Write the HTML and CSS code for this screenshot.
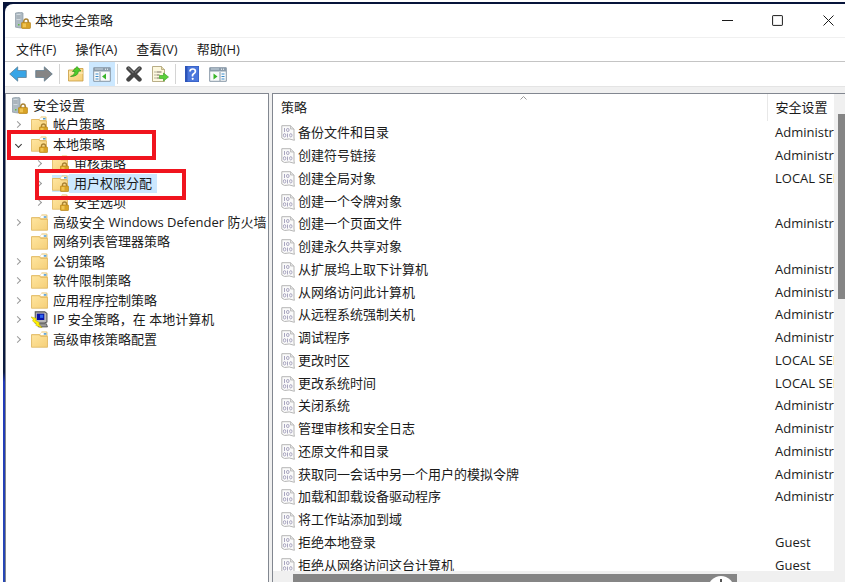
FILE: index.html
```html
<!DOCTYPE html>
<html lang="zh-CN">
<head>
  <meta charset="utf-8" />
  <title>本地安全策略</title>
  <link rel="stylesheet" href="styles.css">
</head>
<body>
  <svg class="sprite" aria-hidden="true">
    <defs>
      <linearGradient id="gold" x1="0" y1="0" x2="1" y2="1">
        <stop offset="0" stop-color="#ffe6a0" /><stop offset="1" stop-color="#f5cf78" />
      </linearGradient>
    </defs>
    <symbol id="folder" viewBox="0 0 16 16">
      <path d="M.5 3h8l1.500-2.500h4.500q1 0 1 1V14.500H.5z" fill="#e9c46d" />
      <path d="M9.500 1.500h5v2.500h-6z" fill="#fff" /><path d="M12 2h2.500v1.500H12z" fill="#4d9ad4" />
      <path d="M.5 3.500h7.500l1 1.500h6.500V15.300H.5z" fill="url(#gold)" stroke="#dcb25a" stroke-width=".7" />
    </symbol>
    <symbol id="lock" viewBox="0 0 9 10">
      <path d="M2.500 5V3a2 2 0 0 1 4 0v2" fill="none" stroke="#a98233" stroke-width="1.400" />
      <rect x=".5" y="4" width="8" height="5.500" rx=".6" fill="#d9a326" stroke="#b8851a" stroke-width=".7" />
      <path d="M1.500 5h3v3.500h-3z" fill="#f0c452" />
    </symbol>
    <symbol id="folder-lock" viewBox="0 0 17 17">
      <use href="#folder" width="16" height="16" />
      <use href="#lock" x="8" y="7" width="9" height="10" />
    </symbol>
    <symbol id="server-lock" viewBox="0 0 17 17">
      <path d="M1.500 1l5-.8 2.500.8v14l-2.500 1-5-.8z" fill="#aebac3" stroke="#8a98a3" stroke-width=".7" />
      <path d="M2.500 3h4M2.500 5h4M2.500 7h4" stroke="#f4f8fa" />
      <path d="M2.500 4h4M2.500 6h4" stroke="#61717c" stroke-width=".7" />
      <path d="M4 12h1.500v1.500H4z" fill="#63c044" />
      <use href="#lock" x="7" y="6" width="10" height="11" />
    </symbol>
    <symbol id="ipsec" viewBox="0 0 16 16">
      <path d="M4 .8h9l2 1.500v8l-2 1H4z" fill="#b8b8b8" stroke="#555" />
      <path d="M5.500 2.500h7v6h-7z" fill="#0712a8" /><path d="M8.500 3.500h3v3h-3z" fill="#2c65f0" />
      <path d="M6 12h8.500l1 3H7z" fill="#9e9e9e" stroke="#444" stroke-width=".7" />
      <path d="M0 5.500l5 1.500-.5 2 3.500 2-.5 1.500 3 3.500-6-2.500.5-1.500-3.500-2.500.5-1.500z" fill="#fff200" stroke="#b0a000" stroke-width=".4" />
    </symbol>
    <symbol id="policy" viewBox="0 0 14 16">
      <path d="M.8.7h8.700l3.500 3.300v9l.4 2.300Q8 13 3.500 14.500L.8 13z" fill="#fafafa" stroke="#b5b5b5" />
      <path d="M9.500.7v3.300H13" fill="#e2e2e2" stroke="#b5b5b5" stroke-width=".8" />
      <g fill="none" stroke="#a9a6c0">
        <path d="M3.500 3v4M6.500 8.500v4" />
        <ellipse cx="6.800" cy="5" rx="1.300" ry="1.600" />
        <ellipse cx="3.600" cy="10.300" rx="1.200" ry="1.700" />
        <ellipse cx="9.800" cy="10.300" rx="1.200" ry="1.700" />
      </g>
    </symbol>
    <symbol id="arrow" viewBox="0 0 18 16">
      <path d="M.7 8l8-7.200V4.500H17.300v7H8.700v3.700z" fill="currentColor" stroke="#56758a" stroke-width=".7" stroke-linejoin="round" />
    </symbol>
    <symbol id="window-pane" viewBox="0 0 18 16">
      <path d="M.7 1.700h16.600v13.600H.7z" fill="#f8fafb" stroke="#8696a5" />
      <path d="M1 2h16v3.500H1z" fill="#8c9dac" /><path d="M2 3h8" stroke="#c9d5df" />
      <path d="M12 3.200h1M14 3.200h1" stroke="#fff" />
    </symbol>
  </svg>

  <div class="desktop">
    <main class="window">
      <header class="titlebar">
        <svg class="icon"><use href="#server-lock" /></svg>
        <h1>本地安全策略</h1>
        <div class="caption-buttons">
          <button aria-label="最小化"><svg viewBox="0 0 11 11"><path d="M0 5.500h11" /></svg></button>
          <button aria-label="最大化"><svg viewBox="0 0 11 11"><rect x=".6" y=".6" width="9.800" height="9.800" rx=".5" /></svg></button>
          <button aria-label="关闭"><svg viewBox="0 0 11 11"><path d="M.5.5l10 10M10.500.5l-10 10" /></svg></button>
        </div>
      </header>

      <nav class="menubar">
        <button>文件(F)</button>
        <button>操作(A)</button>
        <button>查看(V)</button>
        <button>帮助(H)</button>
      </nav>

      <div class="toolbar">
        <button class="back" aria-label="后退"><svg class="tool"><use href="#arrow" /></svg></button>
        <button class="forward" aria-label="前进"><svg class="tool"><use href="#arrow" /></svg></button>
        <span class="sep"></span>
        <button aria-label="上一级">
          <svg class="tool" viewBox="0 0 18 16">
            <path d="M1.500 4h5l1-1.500h8.500V15h-14.500z" fill="url(#gold)" stroke="#c69b3f" stroke-width=".8" />
            <path d="M2 7h14" stroke="#fff2c7" />
            <path d="M3.500 10.500Q7.500 9.500 8 5.500L5.500 5.500 10 .5l4 4.500-2.500.2Q11 10.500 3.500 10.500z" fill="#4ecb2b" stroke="#248c13" stroke-width=".6" />
          </svg>
        </button>
        <button class="on" aria-label="显示/隐藏控制台树" aria-pressed="true">
          <svg class="tool" viewBox="0 0 18 16">
            <use href="#window-pane" />
            <path d="M7 6v9" stroke="#8696a5" />
            <path d="M2.500 8h3M2.500 10.500h3M2.500 13h3" stroke="#3b8bc9" />
            <path d="M13 7.500v6L9 10.500z" fill="#38b529" />
          </svg>
        </button>
        <span class="sep"></span>
        <button aria-label="删除">
          <svg class="tool" viewBox="0 0 18 16">
            <path d="M3.500 2.500L14.500 13.500M14.500 2.500L3.500 13.500" stroke="#444" stroke-width="4.400" stroke-linecap="round" />
            <path d="M3.500 2L8 6.500M14.500 2L10.500 6" stroke="#777" stroke-width="1.200" stroke-linecap="round" />
          </svg>
        </button>
        <button aria-label="导出列表">
          <svg class="tool" viewBox="0 0 18 16">
            <path d="M1.500.5h9l3 3v12h-12z" fill="#fdf8de" stroke="#a79b6c" stroke-width=".8" />
            <path d="M10.500.5v3h3" fill="#e6dcae" stroke="#a79b6c" stroke-width=".7" />
            <path d="M3.500 6h1M5.500 6h5M3.500 9h1M5.500 9h3M3.500 12h1M5.500 12h3" stroke="#746b5d" />
            <path d="M8.500 9.500h4V7l5 4-5 4v-2.500h-4z" fill="#5bd13a" stroke="#2f9c1d" stroke-width=".6" />
          </svg>
        </button>
        <span class="sep"></span>
        <button aria-label="帮助">
          <svg class="tool" viewBox="0 0 18 16">
            <path d="M2 0h14v16H2z" fill="#2c54b8" /><path d="M4.500.5h11v15h-11z" fill="#4a76dc" />
            <path d="M7 5.500Q7 3 9.700 3t2.700 2.300q0 1.500-1.700 2.400T9.700 10.500" fill="none" stroke="#fff" stroke-width="1.700" />
            <circle cx="9.700" cy="12.800" r="1.100" fill="#fff" />
          </svg>
        </button>
        <button aria-label="显示/隐藏操作窗格">
          <svg class="tool" viewBox="0 0 18 16">
            <use href="#window-pane" />
            <path d="M11 6v9" stroke="#8696a5" />
            <path d="M12.500 8h3M12.500 10.500h3M12.500 13h3" stroke="#3b8bc9" />
            <path d="M4.500 7.500v6l4-3z" fill="#38b529" />
          </svg>
        </button>
      </div>

      <div class="panes">
        <ul class="tree" role="tree">
          <li class="root" role="treeitem"><svg class="icon"><use href="#server-lock" /></svg><span>安全设置</span></li>
          <li role="treeitem"><i class="chevron"></i><svg class="icon"><use href="#folder-lock" /></svg><span>帐户策略</span></li>
          <li class="marked" role="treeitem" aria-expanded="true"><i class="chevron open"></i><svg class="icon"><use href="#folder-lock" /></svg><span>本地策略</span></li>
          <li class="sub" role="treeitem"><i class="chevron"></i><svg class="icon"><use href="#folder-lock" /></svg><span>审核策略</span></li>
          <li class="sub marked selected" role="treeitem" aria-selected="true"><i class="chevron"></i><svg class="icon"><use href="#folder-lock" /></svg><span>用户权限分配</span></li>
          <li class="sub" role="treeitem"><i class="chevron"></i><svg class="icon"><use href="#folder-lock" /></svg><span>安全选项</span></li>
          <li role="treeitem"><i class="chevron"></i><svg class="icon"><use href="#folder" /></svg><span>高级安全 Windows Defender 防火墙</span></li>
          <li role="treeitem"><i class="chevron none"></i><svg class="icon"><use href="#folder" /></svg><span>网络列表管理器策略</span></li>
          <li role="treeitem"><i class="chevron"></i><svg class="icon"><use href="#folder" /></svg><span>公钥策略</span></li>
          <li role="treeitem"><i class="chevron"></i><svg class="icon"><use href="#folder" /></svg><span>软件限制策略</span></li>
          <li role="treeitem"><i class="chevron"></i><svg class="icon"><use href="#folder" /></svg><span>应用程序控制策略</span></li>
          <li role="treeitem"><i class="chevron"></i><svg class="icon"><use href="#ipsec" /></svg><span>IP 安全策略，在 本地计算机</span></li>
          <li role="treeitem"><i class="chevron"></i><svg class="icon"><use href="#folder" /></svg><span>高级审核策略配置</span></li>
        </ul>

        <section class="list">
          <div class="list-view">
            <table>
              <thead>
                <tr><th class="name">策略<svg class="sort" viewBox="0 0 7 4"><path d="M.5 3.500l3-3 3 3" /></svg></th><th class="setting">安全设置</th></tr>
              </thead>
              <tbody>
                <tr><td><svg class="doc"><use href="#policy" /></svg>备份文件和目录</td><td>Administrators</td></tr>
                <tr><td><svg class="doc"><use href="#policy" /></svg>创建符号链接</td><td>Administrators</td></tr>
                <tr><td><svg class="doc"><use href="#policy" /></svg>创建全局对象</td><td>LOCAL SERVICE</td></tr>
                <tr><td><svg class="doc"><use href="#policy" /></svg>创建一个令牌对象</td><td></td></tr>
                <tr><td><svg class="doc"><use href="#policy" /></svg>创建一个页面文件</td><td>Administrators</td></tr>
                <tr><td><svg class="doc"><use href="#policy" /></svg>创建永久共享对象</td><td></td></tr>
                <tr><td><svg class="doc"><use href="#policy" /></svg>从扩展坞上取下计算机</td><td>Administrators</td></tr>
                <tr><td><svg class="doc"><use href="#policy" /></svg>从网络访问此计算机</td><td>Administrators</td></tr>
                <tr><td><svg class="doc"><use href="#policy" /></svg>从远程系统强制关机</td><td>Administrators</td></tr>
                <tr><td><svg class="doc"><use href="#policy" /></svg>调试程序</td><td>Administrators</td></tr>
                <tr><td><svg class="doc"><use href="#policy" /></svg>更改时区</td><td>LOCAL SERVICE</td></tr>
                <tr><td><svg class="doc"><use href="#policy" /></svg>更改系统时间</td><td>LOCAL SERVICE</td></tr>
                <tr><td><svg class="doc"><use href="#policy" /></svg>关闭系统</td><td>Administrators</td></tr>
                <tr><td><svg class="doc"><use href="#policy" /></svg>管理审核和安全日志</td><td>Administrators</td></tr>
                <tr><td><svg class="doc"><use href="#policy" /></svg>还原文件和目录</td><td>Administrators</td></tr>
                <tr><td><svg class="doc"><use href="#policy" /></svg>获取同一会话中另一个用户的模拟令牌</td><td>Administrators</td></tr>
                <tr><td><svg class="doc"><use href="#policy" /></svg>加载和卸载设备驱动程序</td><td>Administrators</td></tr>
                <tr><td><svg class="doc"><use href="#policy" /></svg>将工作站添加到域</td><td></td></tr>
                <tr><td><svg class="doc"><use href="#policy" /></svg>拒绝本地登录</td><td>Guest</td></tr>
                <tr><td><svg class="doc"><use href="#policy" /></svg>拒绝从网络访问这台计算机</td><td>Guest</td></tr>
              </tbody>
            </table>
          </div>
          <div class="vbar"><div class="vthumb"></div></div>
          <div class="hbar"><div class="hthumb"><span class="badge"></span></div></div>
        </section>
      </div>
    </main>
  </div>
</body>
</html>
```
FILE: styles.css
```css
*,
*::before,
*::after {
  box-sizing: border-box;
}

body {
  margin: 0;
  height: 100vh;
  overflow: hidden;
  padding: 2px 0 0 3px;
  background: #fff;
  color: #1b1b1b;
  font-family: "Open Sans", "Noto Sans CJK SC", sans-serif;
  font-size: 13px;
  line-height: 19px;
}

button {
  border: 0;
  padding: 0;
  background: none;
  color: inherit;
  font: inherit;
}

.sprite {
  position: absolute;
  width: 0;
  height: 0;
}

.desktop {
  height: 100%;
  padding: 2px 0 0 2px;
  background: linear-gradient(#07143a 0, #0a1a40 370px, #2038b8 380px, #2747b4 100%);
}

.window {
  display: flex;
  flex-direction: column;
  height: 100%;
  border-radius: 8px 0 0 0;
  background: #fff;
  overflow: hidden;
}

.icon {
  flex: none;
  width: 17px;
  height: 17px;
}

/* title bar */
.titlebar {
  display: flex;
  align-items: center;
  height: 34px;
  padding-left: 9px;
  border-bottom: 1px solid #f0f0f0;
}

h1 {
  flex: 1;
  margin: 0 0 0 4px;
  font-size: 13px;
  font-weight: normal;
}

.caption-buttons {
  display: flex;
}

.caption-buttons button {
  width: 50px;
  height: 33px;
}

.caption-buttons button:last-child {
  width: 43px;
  padding-left: 9px;
}

.caption-buttons svg {
  display: block;
  width: 11px;
  height: 11px;
  margin: auto;
  fill: none;
  stroke: #1b1b1b;
}

.menubar {
  display: flex;
  gap: 19px;
  height: 24px;
  padding-left: 11px;
  border-bottom: 1px solid #c4c4c4;
}

/* toolbar */
.toolbar {
  display: flex;
  height: 25px;
  border-bottom: 1px solid #e4e4e4;
}

.toolbar button {
  display: flex;
  align-items: center;
  justify-content: center;
  width: 26px;
}

.toolbar .on {
  background: #cce8ff;
}

.toolbar .back {
  color: #38a5e6;
}

.toolbar .forward {
  color: #858585;
}

.tool {
  width: 18px;
  height: 16px;
}

.forward .tool {
  transform: scaleX(-1);
}

.sep {
  width: 1px;
  margin: 2px 3px 2px 2px;
  background: #d4d4d4;
}

.panes {
  flex: 1;
  display: grid;
  grid-template-columns: 264px minmax(0, 1fr);
  gap: 3px;
  min-height: 0;
  padding-top: 6px;
  background: #f0f0f0;
}

/* console tree */
.tree {
  margin: 0;
  padding: 1px 0 0;
  list-style: none;
  border: 1px solid #828790;
  border-width: 1px 1px 0;
  background: #fff;
  white-space: nowrap;
}

.tree li {
  position: relative;
  display: flex;
  align-items: center;
  height: 20px;
  padding-left: 6px;
}

.tree li:nth-child(even) {
  height: 19px;
}

.tree .sub {
  padding-left: 27px;
}

.tree span {
  padding: 0 5px;
}

.tree .root {
  padding-left: 5px;
}

.selected .icon,
.selected span {
  background: #cce8ff;
}

.chevron {
  flex: none;
  width: 14px;
  margin-right: 5px;
}

.chevron::before {
  content: "";
  display: block;
  width: 5px;
  height: 5px;
  margin-left: 3px;
  border: 1px solid #999;
  border-width: 1px 1px 0 0;
  transform: rotate(45deg);
}

.chevron.open::before {
  margin-left: 4px;
  border-color: #333;
  transform: rotate(135deg);
}

.chevron.none::before {
  display: none;
}

/* red frames round the highlighted nodes */
.marked::after {
  content: "";
  position: absolute;
  z-index: 1;
  top: -4px;
  left: 1px;
  width: 149px;
  height: 30px;
  border: 4px solid #f0141e;
}

.sub.marked::after {
  left: 29px;
  width: 151px;
  height: 31px;
}

/* policy list */
.list {
  display: grid;
  grid-template-columns: minmax(0, 1fr) 11px;
  grid-template-rows: minmax(0, 1fr) 11px;
  border: 1px solid #828790;
  border-width: 1px 0 0 1px;
  min-height: 0;
}

.list-view {
  background: #fff;
  overflow: hidden;
}

table {
  width: 100%;
  border-collapse: collapse;
  table-layout: fixed;
}

th,
td {
  height: 23px;
  padding: 0 0 0 8px;
  font-weight: normal;
  text-align: left;
  white-space: nowrap;
  overflow: hidden;
}

tbody tr:nth-child(4n) td {
  height: 22px;
}

th {
  position: relative;
  height: 27px;
}

.setting {
  width: 67px;
  border-left: 1px solid #e8e8e8;
}

.sort {
  position: absolute;
  top: 2px;
  left: 50%;
  width: 7px;
  height: 4px;
  fill: none;
  stroke: #999;
}

.doc {
  width: 14px;
  height: 16px;
  margin-right: 3px;
  vertical-align: -4px;
}

/* scroll bars */
.vbar {
  padding: 20px 0 0 4px;
  background: #f0f0f0;
}

.vthumb {
  height: 185px;
  background: #858585;
}

.hbar {
  grid-column: 1 / -1;
  padding: 3px 108px 0 20px;
  background: #f0f0f0;
}

.hthumb {
  position: relative;
  height: 8px;
  background: #858585;
  overflow: hidden;
}

.badge {
  position: absolute;
  top: 2px;
  right: 3px;
  width: 26px;
  height: 26px;
  border-radius: 50%;
  background: #fff;
}

.badge::before {
  content: "";
  position: absolute;
  top: 3px;
  left: 12px;
  width: 2px;
  height: 8px;
  background: #555;
}
```
